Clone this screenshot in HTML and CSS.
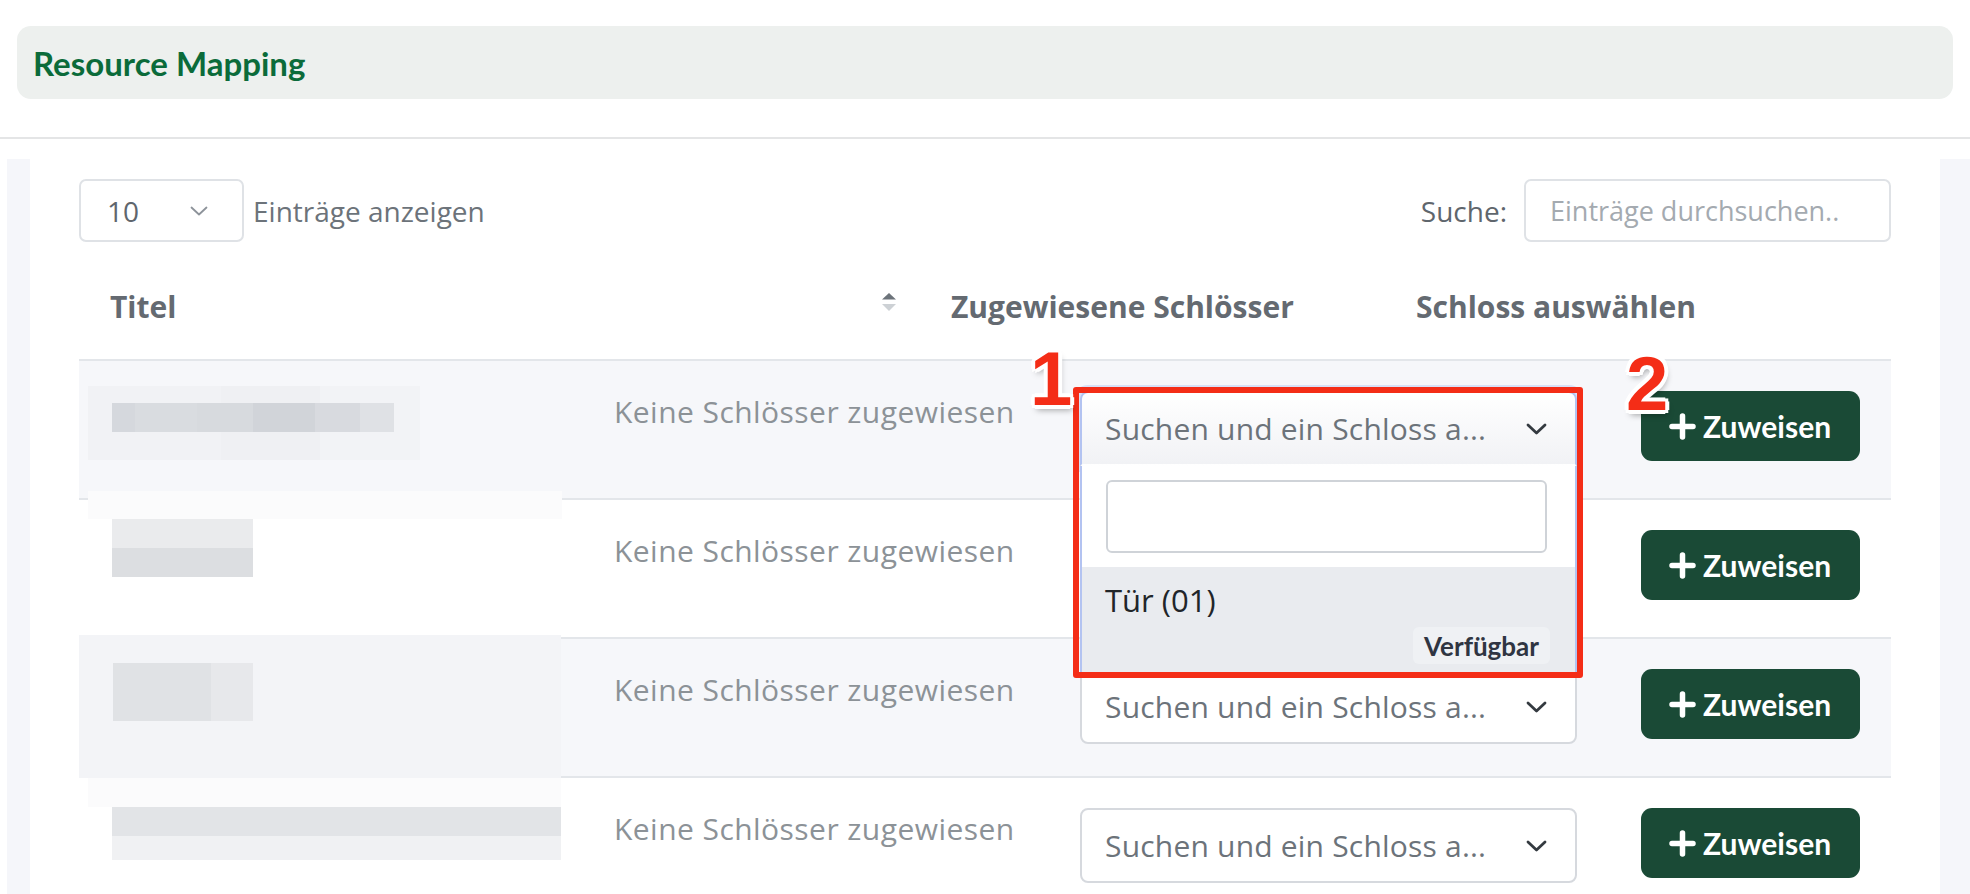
FILE: index.html
```html
<!DOCTYPE html>
<html lang="de">

<head>
  <meta charset="UTF-8" />
  <meta name="viewport" content="width=device-width, initial-scale=1.0" />
  <title>Resource Mapping</title>
  <link rel="stylesheet" href="styles.css">
</head>

<body>
  <header class="top">
    <div class="top-card">
      <h1>Resource Mapping</h1>
    </div>
  </header>

  <main class="page">
    <section class="card">
      <!-- length + search -->
      <div class="controls">
        <div class="length">
          <div class="length-select">
            <span>10</span>
            <svg width="18" height="10" viewBox="0 0 18 10"><polyline points="1.5,1.5 9,8.5 16.5,1.5" fill="none" stroke="#8d939a" stroke-width="1.8" stroke-linecap="round" stroke-linejoin="round" /></svg>
          </div>
          <span>Einträge anzeigen</span>
        </div>
        <div class="search">
          <span>Suche:</span>
          <div class="search-input">Einträge durchsuchen..</div>
        </div>
      </div>

      <!-- table head -->
      <div class="thead">
        <div class="th-sort">
          <span>Titel</span>
          <svg class="sort-icon" width="14" height="19" viewBox="0 0 14 19">
            <polygon points="0,6.5 7,0 14,6.5" fill="#6c737a" />
            <polygon points="0,11 14,11 7,18" fill="#cdd1d5" />
          </svg>
        </div>
        <div>Zugewiesene Schlösser</div>
        <div>Schloss auswählen</div>
      </div>

      <!-- row 1 (open select) -->
      <div class="row striped">
        <div class="cell-title">
          <div class="blur blur-a"><span></span></div>
        </div>
        <div class="cell">Keine Schlösser zugewiesen</div>
        <div class="cell">
          <div class="lock-select open">
            <span>Suchen und ein Schloss a...</span>
            <svg width="21" height="12" viewBox="0 0 21 12"><polyline points="2,2 10.5,10 19,2" fill="none" stroke="#343a40" stroke-width="2.8" stroke-linecap="round" stroke-linejoin="round" /></svg>
            <div class="dropdown">
              <div class="dropdown-search">
                <div></div>
              </div>
              <div class="option">
                <span>Tür (01)</span>
                <span class="badge">Verfügbar</span>
              </div>
            </div>
            <div class="callout"></div>
            <span class="marker marker-1">1</span>
          </div>
        </div>
        <div class="cell">
          <button class="assign-btn">
            <svg width="27" height="27" viewBox="0 0 27 27"><path d="M13.5 3v21M3 13.5h21" stroke="#fff" stroke-width="5.5" stroke-linecap="round" /></svg>
            Zuweisen
            <span class="marker marker-2">2</span>
          </button>
        </div>
      </div>

      <!-- row 2 -->
      <div class="row">
        <div class="cell-title">
          <div class="blur blur-b"><span></span></div>
        </div>
        <div class="cell">Keine Schlösser zugewiesen</div>
        <div class="cell">
          <div class="lock-select">
            <span>Suchen und ein Schloss a...</span>
            <svg width="21" height="12" viewBox="0 0 21 12"><polyline points="2,2 10.5,10 19,2" fill="none" stroke="#343a40" stroke-width="2.8" stroke-linecap="round" stroke-linejoin="round" /></svg>
          </div>
        </div>
        <div class="cell">
          <button class="assign-btn">
            <svg width="27" height="27" viewBox="0 0 27 27"><path d="M13.5 3v21M3 13.5h21" stroke="#fff" stroke-width="5.5" stroke-linecap="round" /></svg>
            Zuweisen
          </button>
        </div>
      </div>

      <!-- row 3 -->
      <div class="row striped">
        <div class="cell-title">
          <div class="blur blur-c"><span></span></div>
        </div>
        <div class="cell">Keine Schlösser zugewiesen</div>
        <div class="cell">
          <div class="lock-select">
            <span>Suchen und ein Schloss a...</span>
            <svg width="21" height="12" viewBox="0 0 21 12"><polyline points="2,2 10.5,10 19,2" fill="none" stroke="#343a40" stroke-width="2.8" stroke-linecap="round" stroke-linejoin="round" /></svg>
          </div>
        </div>
        <div class="cell">
          <button class="assign-btn">
            <svg width="27" height="27" viewBox="0 0 27 27"><path d="M13.5 3v21M3 13.5h21" stroke="#fff" stroke-width="5.5" stroke-linecap="round" /></svg>
            Zuweisen
          </button>
        </div>
      </div>

      <!-- row 4 -->
      <div class="row">
        <div class="cell-title">
          <div class="blur blur-d"><span></span></div>
        </div>
        <div class="cell">Keine Schlösser zugewiesen</div>
        <div class="cell">
          <div class="lock-select">
            <span>Suchen und ein Schloss a...</span>
            <svg width="21" height="12" viewBox="0 0 21 12"><polyline points="2,2 10.5,10 19,2" fill="none" stroke="#343a40" stroke-width="2.8" stroke-linecap="round" stroke-linejoin="round" /></svg>
          </div>
        </div>
        <div class="cell">
          <button class="assign-btn">
            <svg width="27" height="27" viewBox="0 0 27 27"><path d="M13.5 3v21M3 13.5h21" stroke="#fff" stroke-width="5.5" stroke-linecap="round" /></svg>
            Zuweisen
          </button>
        </div>
      </div>
    </section>
  </main>
</body>

</html>
```

FILE: styles.css
```css
* {
  margin: 0;
  padding: 0;
  box-sizing: border-box;
}

body {
  width: 1970px;
  height: 894px;
  overflow: hidden;
  background: #fff;
  font-family: "Open Sans", "Noto Sans", sans-serif;
  color: #6c737a;
}

/**
 * top bar
 */
.top {
  padding: 26px 17px 38px;
  border-bottom: 2px solid #e4e5e6;
}

.top-card {
  display: flex;
  align-items: center;
  height: 73px;
  padding-left: 16px;
  border-radius: 14px;
  background: #edf0ee;
}

.top-card h1 {
  font-family: Lato, "Open Sans", sans-serif;
  font-weight: 700;
  font-size: 33px;
  color: #0b6b3a;
}

/**
 * page + card
 */
.page {
  margin: 20px 0 0 7px;
  padding: 0 30px 0 23px;
  background: #f5f6fa;
}

.card {
  height: 735px;
  padding: 20px 49px 0;
  background: #fff;
}

.controls {
  display: flex;
  justify-content: space-between;
  align-items: center;
  height: 63px;
}

.length {
  display: flex;
  align-items: center;
  gap: 9px;
  font-size: 28px;
}

.length-select {
  display: flex;
  justify-content: space-between;
  align-items: center;
  width: 165px;
  height: 63px;
  padding: 0 34px 0 26px;
  border: 2px solid #dfe2e6;
  border-radius: 7px;
  color: #5f666d;
}

.search {
  display: flex;
  align-items: center;
  gap: 17px;
  font-size: 28px;
  color: #5f666d;
}

.search-input {
  display: flex;
  align-items: center;
  width: 367px;
  height: 63px;
  padding-left: 24px;
  border: 2px solid #dfe2e6;
  border-radius: 7px;
  font-size: 27px;
  color: #a4aab0;
}

/**
 * table
 */
.thead {
  display: grid;
  grid-template-columns: 841px 465px 1fr;
  align-items: center;
  height: 117px;
  padding-top: 11px;
  font-weight: 700;
  font-size: 30px;
  color: #646a71;
}

.thead>div {
  padding-left: 31px;
}

.thead>.th-sort {
  display: flex;
  justify-content: space-between;
  align-items: center;
  padding-right: 24px;
}

.sort-icon {
  margin-top: -8px;
}

.row {
  display: grid;
  grid-template-columns: 504px 466px 561px 1fr;
  align-items: start;
  height: 139px;
  border-top: 2px solid #e3e6ea;
}

.row.striped {
  background: #f6f7fa;
}

.cell {
  padding: 30px 0 0 31px;
  font-size: 30px;
  letter-spacing: 0.45px;
  color: #8c9297;
}

/* blurred titles */
.blur span {
  display: block;
}

.blur-a {
  width: 332px;
  height: 74px;
  margin: 25px 0 0 9px;
  padding: 17px 26px 28px 24px;
  background: linear-gradient(90deg, #f1f2f5 0 40%, #eff0f3 40% 70%, #f2f3f6 70%);
}

.blur-a span {
  height: 29px;
  background: linear-gradient(90deg, #d5d8dd 0 8%, #d9dce0 8% 30%, #d7dade 30% 50%, #d1d4d9 50% 72%, #d8dadf 72% 88%, #dfe1e5 88%);
}

.blur-b {
  width: 474px;
  height: 86px;
  margin: -9px 0 0 9px;
  padding: 28px 0 0 24px;
  background: linear-gradient(#fbfbfc 0 28px, #fff 28px);
}

.blur-b span {
  width: 141px;
  height: 58px;
  background: linear-gradient(#eaebed 0 50%, #dcdee1 50%);
}

.blur-c {
  width: 482px;
  height: 143px;
  margin-top: -4px;
  padding: 28px 0 0 34px;
  background: #f3f4f7;
}

.blur-c span {
  width: 140px;
  height: 58px;
  background: linear-gradient(90deg, #e0e2e5 0 70%, #e7e8eb 70%);
}

.blur-d {
  width: 473px;
  height: 82px;
  margin: 0 0 0 9px;
  padding: 29px 0 0 24px;
  background: linear-gradient(#fbfbfc 0 29px, #fff 29px);
}

.blur-d span {
  height: 53px;
  background: linear-gradient(#e2e4e7 0 29px, #f0f1f3 29px);
}

/* select2 like box */
.lock-select {
  position: relative;
  display: flex;
  justify-content: space-between;
  align-items: center;
  width: 497px;
  height: 75px;
  padding: 0 28px 0 23px;
  border: 2px solid #d6d9de;
  border-radius: 8px;
  background: #fff;
  letter-spacing: 0.2px;
  color: #6c737a;
}

.lock-select.open {
  border-color: #b3c3f1;
  border-bottom-color: transparent;
  border-radius: 8px 8px 0 0;
  background: linear-gradient(#fff, #f1f2f5);
  box-shadow: 0 0 0 6px rgba(180, 197, 242, 0.45);
}

.dropdown {
  position: absolute;
  top: calc(100% + 2px);
  left: -2px;
  z-index: 2;
  width: 497px;
  border: 2px solid #b3c3f1;
  border-top: 0;
  background: #fff;
  letter-spacing: 0;
}

.dropdown-search {
  padding: 14px 28px 14px 24px;
}

.dropdown-search>div {
  height: 73px;
  border: 2px solid #cfd3d8;
  border-radius: 6px;
}

.option {
  display: flex;
  flex-direction: column;
  padding: 13px 25px 9px 23px;
  background: #e9ebef;
  font-size: 31px;
  line-height: 40px;
  color: #212529;
}

.badge {
  align-self: flex-end;
  display: flex;
  align-items: center;
  height: 37px;
  margin-top: 7px;
  padding: 0 11px;
  border-radius: 6px;
  background: #eff1f4;
  font-family: Lato, sans-serif;
  font-weight: 700;
  font-size: 26px;
  color: #2f3542;
}

.assign-btn {
  position: relative;
  display: flex;
  align-items: center;
  gap: 7px;
  width: 219px;
  height: 70px;
  padding-left: 28px;
  border: 0;
  border-radius: 11px;
  background: #1a4a36;
  font-family: Lato, sans-serif;
  font-weight: 700;
  font-size: 30px;
  letter-spacing: 0;
  color: #fff;
  cursor: pointer;
}

/**
 * screenshot annotations
 */
.callout {
  position: absolute;
  left: -9px;
  top: -6px;
  z-index: 3;
  width: 510px;
  height: 291px;
  border: 6px solid #f42d17;
  border-radius: 3px;
}

.marker {
  position: absolute;
  z-index: 4;
  font-family: "Liberation Sans", Arial, sans-serif;
  font-weight: 700;
  font-size: 76px;
  line-height: 1;
  letter-spacing: 0;
  color: #f42d17;
  text-shadow: -4px 0 #fff, 4px 0 #fff, 0 -4px #fff, 0 4px #fff,
    -3px -3px #fff, 3px -3px #fff, -3px 3px #fff, 3px 3px #fff,
    2px 5px 6px rgba(0, 0, 0, 0.35);
}

.marker-1 {
  left: -52px;
  top: -52px;
}

.marker-2 {
  left: -15px;
  top: -45px;
}
```
